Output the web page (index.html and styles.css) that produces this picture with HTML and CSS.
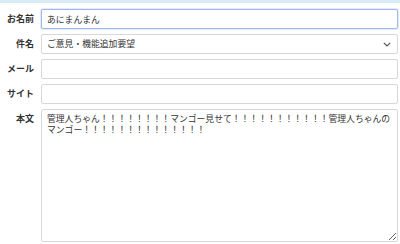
FILE: index.html
```html
<!DOCTYPE html>
<html lang="ja">
<head>
    <meta charset="UTF-8">
    <meta name="viewport" content="width=device-width, initial-scale=1.0">
    <title>お問い合わせ</title>
    <link rel="stylesheet" href="styles.css">
</head>
<body>
    <div class="top-bar"></div>
    <form class="contact-form">
        <label class="field-label" for="name">お名前</label>
        <input class="field-input focused" id="name" type="text" value="あにまんまん">

        <label class="field-label" for="subject">件名</label>
        <div class="select-wrap">
            <select class="field-input field-select" id="subject">
                <option>ご意見・機能追加要望</option>
                <option>不具合報告</option>
                <option>その他</option>
            </select>
            <svg class="chevron" width="8" height="5" viewBox="0 0 8 5">
                <path d="M0.8 0.8 L4 4 L7.2 0.8" fill="none" stroke="#555" stroke-width="1.2"/>
            </svg>
        </div>

        <label class="field-label" for="mail">メール</label>
        <input class="field-input" id="mail" type="email">

        <label class="field-label" for="site">サイト</label>
        <input class="field-input" id="site" type="text">

        <label class="field-label label-top" for="body">本文</label>
        <textarea class="field-input field-textarea" id="body">管理人ちゃん！！！！！！！！マンゴー見せて！！！！！！！！！！！管理人ちゃんのマンゴー！！！！！！！！！！！！！！</textarea>
    </form>
</body>
</html>
```

FILE: styles.css
```css
* {
    margin: 0;
    padding: 0;
    box-sizing: border-box;
    font-family: "Noto Sans CJK JP", "Noto Sans", sans-serif;
}

body {
    background: #fff;
    color: #333;
}

.top-bar {
    height: 3px;
    background: #d8ecf8;
}

.contact-form {
    display: grid;
    grid-template-columns: 34px 1fr;
    column-gap: 7px;
    row-gap: 5px;
    padding: 6px 2px 0 0;
    align-items: center;
}

.field-label {
    text-align: right;
    font-size: 9px;
    line-height: 12px;
    font-weight: 700;
    color: #333;
}

.label-top {
    align-self: start;
    padding-top: 4px;
}

.field-input {
    display: block;
    width: 100%;
    height: 20px;
    border: 1px solid #d8d8d8;
    border-radius: 2px;
    background: #fff;
    padding: 0 5px;
    font-size: 8.8px;
    line-height: 12px;
    color: #333;
    outline: none;
}

.field-input.focused {
    border-color: #9fb8ec;
    box-shadow: 0 0 0 1px #e3ebfa;
}

.select-wrap {
    position: relative;
    height: 20px;
}

.field-select {
    appearance: none;
    -webkit-appearance: none;
}

.chevron {
    position: absolute;
    right: 7px;
    top: 8px;
    pointer-events: none;
}

.field-textarea {
    height: 133px;
    padding: 3px 4px 3px 5px;
    line-height: 11px;
    resize: vertical;
}
```
